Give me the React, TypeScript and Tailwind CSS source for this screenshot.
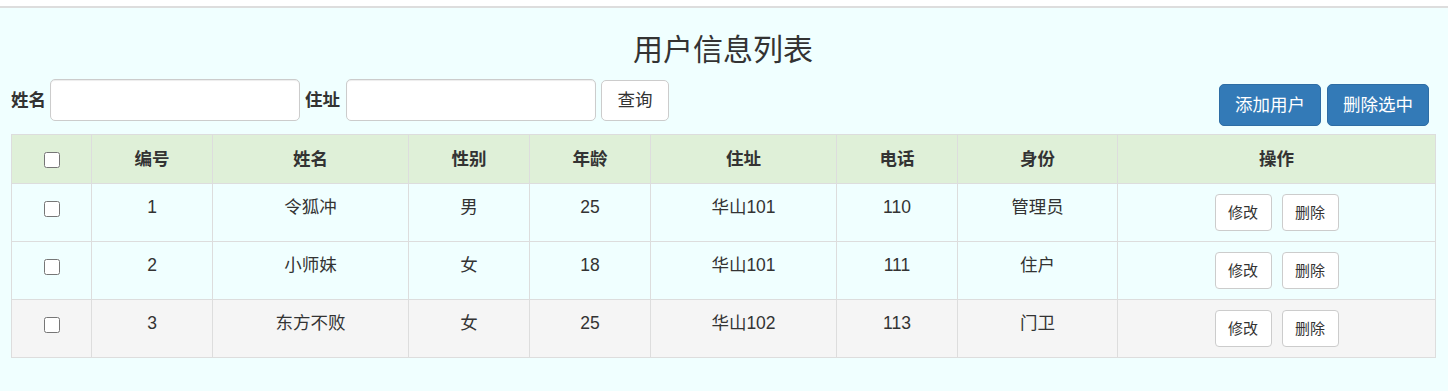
import React from "react";

type User = {
  id: number;
  name: string;
  gender: string;
  age: number;
  address: string;
  phone: string;
  role: string;
};

const users: User[] = [
  { id: 1, name: "令狐冲", gender: "男", age: 25, address: "华山101", phone: "110", role: "管理员" },
  { id: 2, name: "小师妹", gender: "女", age: 18, address: "华山101", phone: "111", role: "住户" },
  { id: 3, name: "东方不败", gender: "女", age: 25, address: "华山102", phone: "113", role: "门卫" },
];

const headers = ["编号", "姓名", "性别", "年龄", "住址", "电话", "身份", "操作"];

const font = { fontFamily: '"Liberation Sans", "Noto Sans CJK SC", sans-serif' };

export default function App() {
  return (
    <div className="min-h-screen bg-[#f0ffff] text-[#333]" style={font}>
      {/* top strip */}
      <div className="h-[6px] bg-white" />
      <div className="h-[2px] bg-[#dddddd]" />

      <div className="pl-[11px] pr-[13px]">
        <h3 className="mt-[25px] mb-[13px] text-center text-[30px] leading-[33px] font-normal">用户信息列表</h3>

        {/* search + actions */}
        <div className="flex items-start justify-between">
          <div className="flex items-center h-[42px]">
            <label className="font-bold text-[17.5px] mr-[4px]">姓名</label>
            <input className="w-[250px] h-[42px] bg-white border border-[#ccc] rounded-[5px] shadow-[inset_0_1px_1px_rgba(0,0,0,0.075)] px-3 text-[17.5px] outline-none" />
            <label className="font-bold text-[17.5px] ml-[5px] mr-[6px]">住址</label>
            <input className="w-[250px] h-[42px] bg-white border border-[#ccc] rounded-[5px] shadow-[inset_0_1px_1px_rgba(0,0,0,0.075)] px-3 text-[17.5px] outline-none" />
            <button className="ml-[5px] w-[68px] h-[41px] bg-white border border-[#ccc] rounded-[5px] text-[17.5px] text-[#333]">查询</button>
          </div>
          <div className="flex gap-[6px] mt-[5px] mr-[6px]">
            <button className="w-[102px] h-[42px] bg-[#337ab7] border border-[#2e6da4] rounded-[5px] text-white text-[17.5px]">添加用户</button>
            <button className="w-[102px] h-[42px] bg-[#337ab7] border border-[#2e6da4] rounded-[5px] text-white text-[17.5px]">删除选中</button>
          </div>
        </div>

        {/* table */}
        <table className="mt-[8px] w-[1424px] table-fixed border-collapse text-[17.5px] leading-[25px]">
          <colgroup>
            <col className="w-[80px]" />
            <col className="w-[121px]" />
            <col className="w-[196px]" />
            <col className="w-[121px]" />
            <col className="w-[121px]" />
            <col className="w-[186px]" />
            <col className="w-[121px]" />
            <col className="w-[160px]" />
            <col className="w-[318px]" />
          </colgroup>
          <thead>
            <tr className="bg-[#dff0d8] h-[49px]">
              <th className="border border-[#ddd] align-middle">
                <input type="checkbox" className="w-4 h-4 align-middle" />
              </th>
              {headers.map((h) => (
                <th key={h} className="border border-[#ddd] font-bold align-middle">{h}</th>
              ))}
            </tr>
          </thead>
          <tbody>
            {users.map((u, i) => (
              <tr key={u.id} className={`h-[58px] ${i === 2 ? "bg-[#f5f5f5]" : ""}`}>
                <td className="border border-[#ddd] text-center align-top pt-[12px]">
                  <input type="checkbox" className="w-4 h-4 align-middle" />
                </td>
                <td className="border border-[#ddd] text-center align-top pt-[11px]">{u.id}</td>
                <td className="border border-[#ddd] text-center align-top pt-[11px]">{u.name}</td>
                <td className="border border-[#ddd] text-center align-top pt-[11px]">{u.gender}</td>
                <td className="border border-[#ddd] text-center align-top pt-[11px]">{u.age}</td>
                <td className="border border-[#ddd] text-center align-top pt-[11px]">{u.address}</td>
                <td className="border border-[#ddd] text-center align-top pt-[11px]">{u.phone}</td>
                <td className="border border-[#ddd] text-center align-top pt-[11px]">{u.role}</td>
                <td className="border border-[#ddd] align-top pt-[10px]">
                  <div className="flex justify-center gap-[10px]">
                    <button className="w-[57px] h-[37px] bg-white border border-[#ccc] rounded-[4px] text-[15px] text-[#333]">修改</button>
                    <button className="w-[57px] h-[37px] bg-white border border-[#ccc] rounded-[4px] text-[15px] text-[#333]">删除</button>
                  </div>
                </td>
              </tr>
            ))}
          </tbody>
        </table>
      </div>
    </div>
  );
}
